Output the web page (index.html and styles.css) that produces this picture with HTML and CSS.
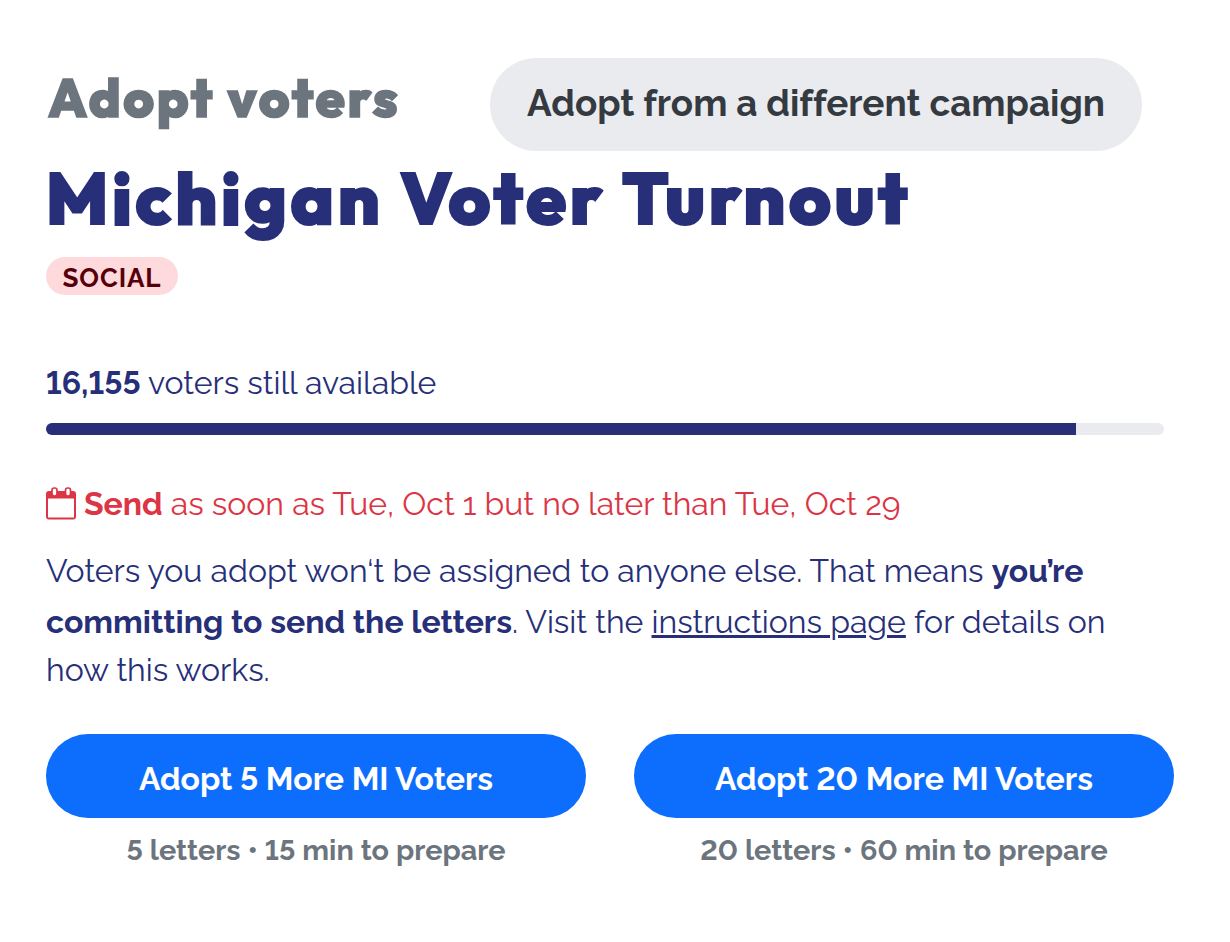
FILE: index.html
```
<!DOCTYPE html>
<html lang="en">
<head>
    <meta charset="UTF-8">
    <meta name="viewport" content="width=device-width, initial-scale=1.0">
    <title>Adopt voters</title>
    <link rel="stylesheet" href="styles.css">
</head>
<body>
    <main class="container">
        <header class="top-bar">
            <h2>Adopt voters</h2>
            <a href="#" class="change-campaign"><span>Adopt from a different campaign</span></a>
        </header>

        <h1><span>Michigan Voter Turnout</span></h1>
        <span class="badge">SOCIAL</span>

        <section class="availability">
            <p><strong>16,155</strong> <span>voters still available</span></p>
            <div class="progress">
                <div class="progress-bar" style="width: 92.13%"></div>
            </div>
        </section>

        <p class="send-dates">
            <svg class="calendar" viewBox="0 0 30 33" aria-hidden="true">
                <path d="M3 4H27Q30 4 30 7V29.500Q30 32.500 27 32.500H3Q0 32.500 0 29.500V7Q0 4 3 4Z" fill="#dc3545"/>
                <rect x="2" y="11.500" width="26" height="19" rx="0.600" fill="#fff"/>
                <rect x="6" y="1" width="5" height="8" rx="2.200" fill="#fff" stroke="#dc3545" stroke-width="1.700"/>
                <rect x="19.500" y="1" width="5" height="8" rx="2.200" fill="#fff" stroke="#dc3545" stroke-width="1.700"/>
            </svg>
            <strong>Send</strong>
            <span>as soon as Tue, Oct 1 but no later than Tue, Oct 29</span>
        </p>

        <p class="details">
            <span class="line line-1">Voters you adopt won‘t be assigned to anyone else. That means <strong>you’re</strong></span>
            <span class="line line-2"><strong>committing to send the letters</strong>. Visit the <a href="#">instructions page</a> for details on</span>
            <span class="line line-3">how this works.</span>
        </p>

        <section class="options">
            <div class="option">
                <button type="button">Adopt 5 More MI Voters</button>
                <p>5 letters • 15 min to prepare</p>
            </div>
            <div class="option">
                <button type="button">Adopt 20 More MI Voters</button>
                <p>20 letters • 60 min to prepare</p>
            </div>
        </section>
    </main>
</body>
</html>
```
FILE: styles.css
```
* {
    box-sizing: border-box;
}

body {
    margin: 0;
    background-color: #fff;
    color: #262f78;
    font-family: Raleway, Lato, "Open Sans", sans-serif;
    font-size: 32px;
    line-height: 48px;
}

h1, h2, p {
    margin: 0;
}

h1, h2 {
    font-family: Outfit, Urbanist, Quicksand, Raleway, Lato, sans-serif;
}

.container {
    padding: 58px 56px 0 46px;
    white-space: nowrap;
}

.top-bar {
    display: flex;
    justify-content: space-between;
    align-items: center;
    height: 93px;
    padding-right: 32px;
}

h2 {
    padding-left: 2px;
    padding-bottom: 14px;
    color: #6c757d;
    font-size: 53px;
    font-weight: 800;
    line-height: 60px;
    letter-spacing: 2.6px;
    -webkit-text-stroke: 1.5px #6c757d;
}

.change-campaign {
    display: flex;
    align-items: center;
    justify-content: center;
    width: 652px;
    height: 93px;
    padding-bottom: 3px;
    border-radius: 47px;
    background-color: #e9ebef;
    color: #343a40;
    font-size: 36.8px;
    font-weight: 700;
    text-decoration: none;
    font-variant-ligatures: none;
}

h1 {
    padding-left: 0;
    font-size: 72px;
    font-weight: 800;
    line-height: 84px;
    height: 106px;
    padding-top: 5px;
    letter-spacing: 3.7px;
    -webkit-text-stroke: 2px #262f78;
}

.badge {
    display: flex;
    align-items: center;
    justify-content: center;
    width: 132px;
    height: 38px;
    padding-top: 4px;
    border-radius: 19px;
    background-color: #ffdadd;
    color: #58000a;
    font-size: 26px;
    font-weight: 700;
    letter-spacing: 0.9px;
}

.availability {
    padding-top: 64px;
    font-variant-numeric: lining-nums;
}

.progress {
    width: 1118px;
    height: 12px;
    margin-top: 16px;
    border-radius: 6px;
    background-color: #e9ebef;
    overflow: hidden;
}

.progress-bar {
    height: 100%;
    background-color: #262f78;
}

.send-dates {
    display: flex;
    align-items: center;
    gap: 8px;
    margin-top: 45px;
    color: #dc3545;
}

.calendar {
    width: 30px;
    height: 33px;
    margin-bottom: 1px;
}

.details {
    margin-top: 19px;
}

.line {
    display: block;
}

.line-1 {
    height: 51px;
}

.details a {
    color: inherit;
    text-decoration-thickness: 3px;
    text-underline-offset: 2px;
}

.options {
    display: grid;
    grid-template-columns: 540px 540px;
    gap: 48px;
    margin-top: 40px;
    font-variant-numeric: lining-nums;
}

.option {
    text-align: center;
}

button {
    display: block;
    width: 100%;
    height: 84px;
    padding: 5px 0 0;
    border: 0;
    border-radius: 42px;
    background-color: #0d6efd;
    color: #fff;
    font-family: inherit;
    font-size: 32px;
    font-weight: 700;
    font-variant-numeric: inherit;
}

.option p {
    margin-top: 8px;
    color: #6c757d;
    font-size: 28.8px;
    font-weight: 700;
}
```
